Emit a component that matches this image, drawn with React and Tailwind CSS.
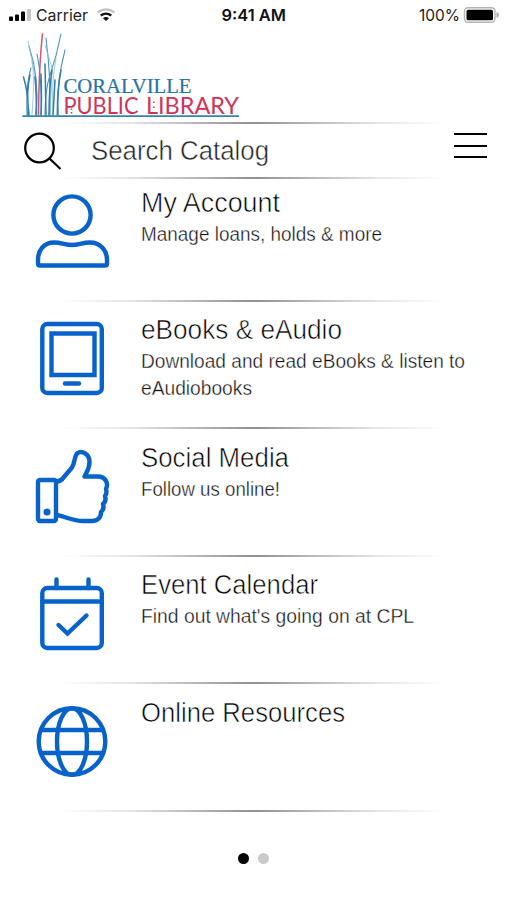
import React from "react";

const sans = "font-[Inter,'Liberation_Sans',sans-serif]";

const Divider = () => (
  <div className="h-[2px] w-full shrink-0 bg-[linear-gradient(to_right,transparent_12%,#e4e4e4_26%,#909090_50%,#e4e4e4_74%,transparent_88%)]" />
);

const Icon = ({ children }) => (
  <svg viewBox="0 0 80 84" className="h-[84px] w-[80px]" fill="none" stroke="#0763c9" strokeWidth="4.4" strokeLinecap="round" strokeLinejoin="round">
    {children}
  </svg>
);

const AccountIcon = () => (
  <Icon>
    <circle cx="40" cy="25" r="18.6" />
    <path d="M8 75.500Q6 75.500 6 73.500V70C6 60 12 52.500 22 52.500C29 52.500 34 55 40 55C46 55 51 52.500 58 52.500C68 52.500 75 60 75 70V73.500Q75 75.500 73 75.500Z" />
  </Icon>
);

const ReaderIcon = () => (
  <Icon>
    <rect x="10.300" y="7" width="59.500" height="69" rx="5" />
    <path d="M19.500 16.500H62.500V58H19.500Z" strokeLinejoin="miter" />
    <path d="M33 66.500H47" />
  </Icon>
);

const ThumbIcon = () => (
  <Icon>
    <rect x="6" y="35" width="18" height="41" rx="2" />
    <circle cx="15" cy="67" r="3.500" fill="#0763c9" stroke="none" />
    <path d="M24.500 36.500Q29 36.500 31.500 32.500L40 22.500C43 18 42 12 45 8.500C50 4.500 57.500 9.500 57.500 17C57.500 24 54.500 27 52.500 31.500H66C73 31.500 77 38 74 44C75 47 74.500 49 73 51C74 54 73.500 57 71 59C72 62 71.500 65 69 67C69 73 65.500 76 60 76H51C41 76 33 71.500 25 70" />
  </Icon>
);

const CalendarIcon = () => (
  <Icon>
    <rect x="10.300" y="16" width="59.500" height="60" rx="5" />
    <path d="M10.500 29.500H69.500M24.500 7.500V16M56.500 7.500V16" />
    <path d="M26.500 53L35.500 61.500L54.500 43.500" strokeLinejoin="miter" />
  </Icon>
);

const GlobeIcon = () => (
  <Icon>
    <circle cx="40" cy="41.500" r="33.300" />
    <ellipse cx="40" cy="41.500" rx="15" ry="33.300" />
    <path d="M9 30H71M9 53H71" />
  </Icon>
);

const items = [
  { title: "My Account", width: 139, lines: [["Manage loans, holds & more", 241]], icon: AccountIcon },
  { title: "eBooks & eAudio", width: 201, lines: [["Download and read eBooks & listen to", 324], ["eAudiobooks", 111]], icon: ReaderIcon },
  { title: "Social Media", width: 148, lines: [["Follow us online!", 139]], icon: ThumbIcon },
  { title: "Event Calendar", width: 177, lines: [["Find out what's going on at CPL", 273]], icon: CalendarIcon },
  { title: "Online Resources", width: 204, lines: [], icon: GlobeIcon },
];

// Single line of text fitted to a known width; the white outline slims the strokes to a light weight.
const Fitted = ({ text, width, size, height, base, color, slim }) => (
  <svg width={width + 6} height={height} className="block overflow-visible">
    <text x="0" y={base} fontFamily="'Liberation Sans', Arial, sans-serif" fontSize={size} fill={color} stroke="#fff" strokeWidth={slim} textLength={width} lengthAdjust="spacingAndGlyphs">{text}</text>
  </svg>
);

const Logo = () => (
  <svg viewBox="20 30 224 90" className="ml-5 h-[90px] w-[224px]" fill="none">
    <g stroke="#3680ae" strokeLinecap="round">
      <path d="M29 46Q40 80 36 115M61 34Q57 55 50 75Q45 90 45 115M46 38Q51 78 50 115M37 54Q42 78 41 115M65 50Q57 80 57 115M31 68Q26 84 27 115" strokeWidth="1.100" stroke="#4b93bb" />
      <path d="M28 41L33 65Q37 85 37 115M45 45L52 68Q52 90 49 115M56 58Q51 85 53 115M32 61Q35 78 32 115" strokeWidth=".8" stroke="#8dc0d8" />
      <path d="M23.500 77Q29 95 28 115M30 75Q26 90 29 115M35 77Q37 100 36 115M41 74Q42 100 41 115M45 64L46 115M52 70Q49 90 49 115M55 80L53 115M61 70Q57 90 58 115" strokeWidth="1.500" stroke="#2f7dac" />
      <path d="M42.500 34Q39 65 38.500 115" stroke="#dc526b" strokeWidth="1.500" />
    </g>
    <text x="63.500" y="93.300" fontFamily="Liberation Serif" fontSize="20.500" fill="#2574a7" stroke="#2574a7" strokeWidth=".2" textLength="128" lengthAdjust="spacingAndGlyphs">CORALVILLE</text>
    <g fontFamily="Lato, sans-serif" fontSize="22.500" fill="#cf3458">
      <text x="63.500" y="113.500" textLength="75" lengthAdjust="spacingAndGlyphs">PUBLIC</text>
      <text x="146" y="113.500" textLength="93" lengthAdjust="spacingAndGlyphs">LIBRARY</text>
    </g>
    <path d="M71.500 108.500V110M71.500 112V113.500M153.800 101.500V103M153.800 106.500V108" stroke="#cf3458" strokeWidth="1.500" />
    <path d="M22.500 116.200H239" stroke="#3483af" strokeWidth="1.800" />
  </svg>
);

const StatusBar = () => (
  <header className="grid h-[30px] grid-cols-3 items-center text-[16px] leading-none text-[#151515]">
    <div className="flex items-center pl-[9px]">
      <svg width="23" height="14" viewBox="0 0 23 14" fill="#000">
        <rect x="0" y="8.500" width="4" height="4.500" rx="1" />
        <rect x="6" y="6.500" width="4" height="6.500" rx="1" />
        <rect x="12" y="3.500" width="4" height="9.500" rx="1" />
        <rect x="18" y="1" width="4" height="12" rx="1" fill="#c6c6c6" />
      </svg>
      <svg width="53" height="20" className="ml-1 overflow-visible">
        <text x="0" y="15.500" fontSize="16" fill="#222" textLength="52" lengthAdjust="spacingAndGlyphs">Carrier</text>
      </svg>
      <svg width="20" height="14" viewBox="0 0 20 14" fill="none" className="ml-[7px]">
        <path d="M1.500 4.500Q10 -1.800 18.500 4.500" stroke="#c2c2c2" strokeWidth="2.200" />
        <path d="M4.700 7.500Q10 3.600 15.300 7.500" stroke="#111" strokeWidth="2.200" />
        <path d="M7 10.200Q10 7.600 13 10.200L10 13Z" fill="#111" />
      </svg>
    </div>
    <svg width="66" height="20" className="justify-self-center">
      <text x="0.5" y="15.500" fontSize="16" fontWeight="600" fill="#111" textLength="64.500" lengthAdjust="spacingAndGlyphs">9:41 AM</text>
    </svg>
    <div className="flex items-center justify-end gap-1 pr-[7px]">
      <svg width="41" height="20" className="overflow-visible">
        <text x="1" y="15.500" fontSize="16" fill="#222" textLength="41" lengthAdjust="spacingAndGlyphs">100%</text>
      </svg>
      <svg width="37" height="16" viewBox="0 0 37 16">
        <rect x="1.500" y=".8" width="30.500" height="14.400" rx="3.500" fill="#fff" stroke="#b4b4b4" strokeWidth="1.400" />
        <rect x="3.500" y="2.800" width="26.500" height="10.400" rx="1.500" fill="#000" />
        <path d="M33.500 5Q36 6 36 8Q36 10 33.500 11Z" fill="#aaa" />
      </svg>
    </div>
  </header>
);

export default function App() {
  return (
    <main className={`flex h-[900px] w-[507px] flex-col overflow-hidden bg-white ${sans}`}>
      <StatusBar />
      <Logo />
      <div className="-mt-[90px] pt-[92px]"><Divider /></div>
      <section className="flex h-[52.5px] shrink-0 items-start">
        <svg width="40" height="40" viewBox="0 0 40 40" fill="none" stroke="#000" strokeWidth="2.200" className="ml-[23px] mt-[7px]">
          <circle cx="16.500" cy="17" r="14.300" />
          <path d="M26.500 27.500L37.500 38" />
        </svg>
        <div className="ml-7 mt-3">
          <Fitted text="Search Catalog" width={178} size={27} height={32} base={23.5} color="#222" slim={0.5} />
        </div>
        <div className="ml-auto mr-5 mt-[9px] flex w-[33px] flex-col gap-[9.5px]">
          <div className="h-[2px] bg-black" />
          <div className="h-[2px] bg-black" />
          <div className="h-[2px] bg-black" />
        </div>
      </section>
      <Divider />
      <div className="-mt-[4.5px]">
        {items.map(({ title, width, lines, icon: Glyph }) => (
          <section key={title} className="flex h-[127.6px] flex-col">
            <div className="flex flex-1 items-start">
              <div className="ml-8 mt-[15.5px] w-[80px] shrink-0"><Glyph /></div>
              <div className="ml-[29px] mt-[13.5px]">
                <Fitted text={title} width={width} size={27} height={33} base={23.5} color="#000" slim={0.6} />
                {lines.map(([text, w]) => (
                  <Fitted key={text} text={text} width={w} size={19.5} height={27} base={19.5} color="#111" slim={0.35} />
                ))}
              </div>
            </div>
            <Divider />
          </section>
        ))}
      </div>
      <div className="mt-[41px] flex justify-center gap-[9px]">
        <div className="size-[11px] rounded-full bg-black" />
        <div className="size-[11px] rounded-full bg-[#cacaca]" />
      </div>
    </main>
  );
}
